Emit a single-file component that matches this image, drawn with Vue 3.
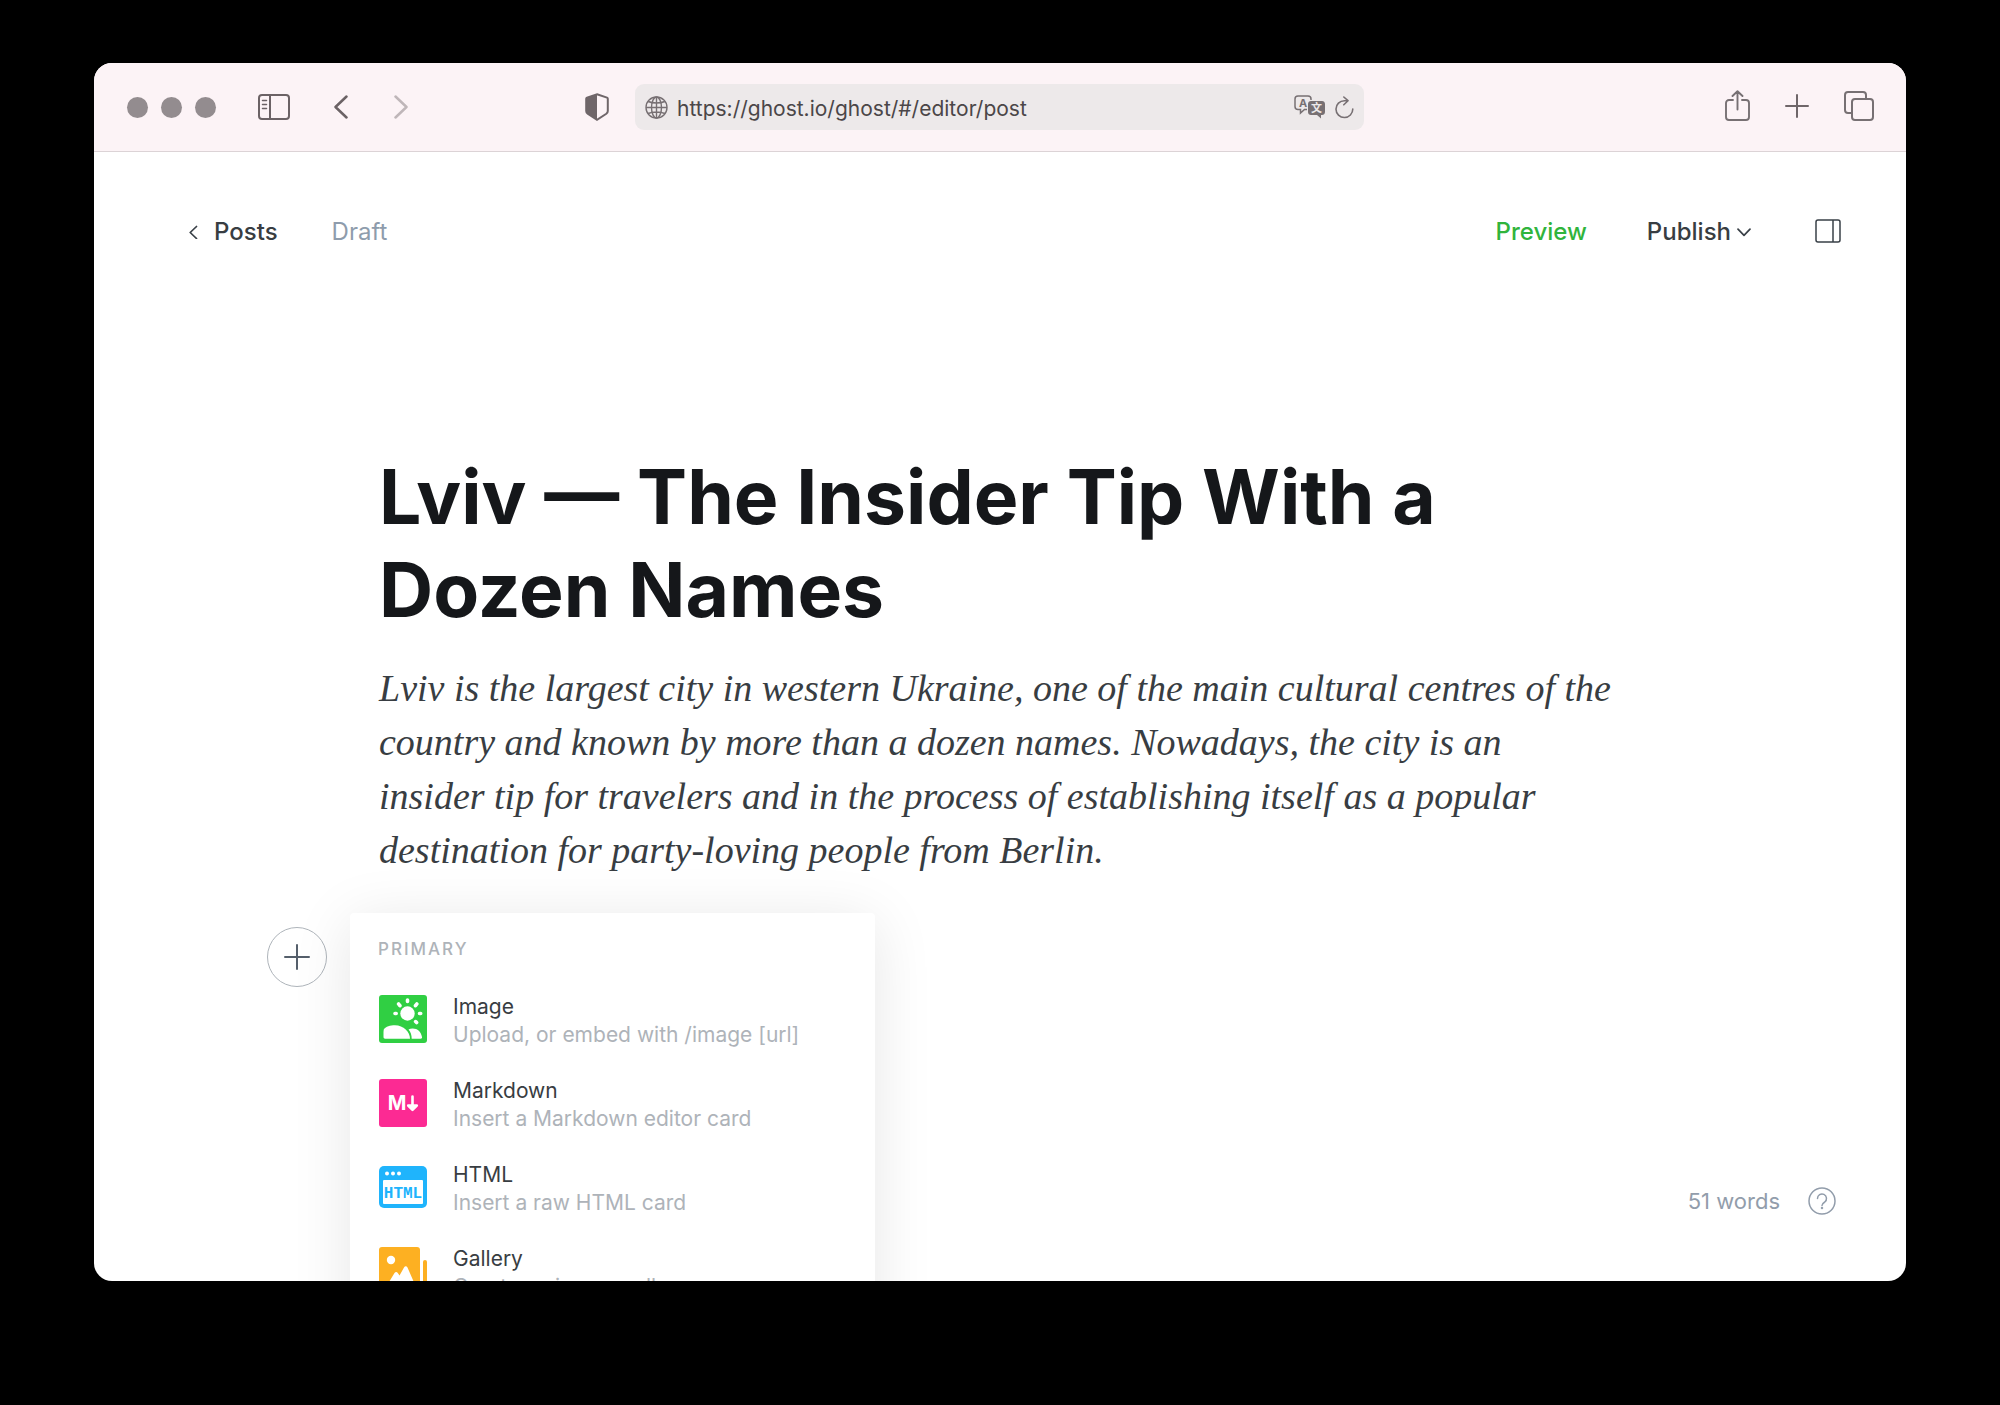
<script setup>
import { ref } from 'vue'

const url = ref('https://ghost.io/ghost/#/editor/post')

const cards = [
  { id: 'image', name: 'Image', hint: 'Upload, or embed with /image [url]' },
  { id: 'markdown', name: 'Markdown', hint: 'Insert a Markdown editor card' },
  { id: 'html', name: 'HTML', hint: 'Insert a raw HTML card' },
  { id: 'gallery', name: 'Gallery', hint: 'Create an image gallery' },
]
</script>

<template>
  <div class="desktop">
    <div class="window">
      <header class="toolbar">
        <div class="side start">
          <div class="lights"><i></i><i></i><i></i></div>
          <button class="tool sidebar" aria-label="Toggle sidebar">
            <svg width="32" height="26" viewBox="0 0 32 26" fill="none" stroke="#6b6265" stroke-width="2">
              <rect x="1" y="1" width="30" height="24" rx="3" />
              <path d="M12 1v24" />
              <path d="M4.500 6.500h4M4.500 10.500h4M4.500 14.500h4" stroke-width="1.500" stroke-linecap="round" />
            </svg>
          </button>
          <button class="tool back" aria-label="Back">
            <svg width="14" height="24" viewBox="0 0 14 24" fill="none" stroke="#6b6265" stroke-width="2.500" stroke-linecap="round" stroke-linejoin="round">
              <path d="M12.500 1.500 1.500 12l11 10.500" />
            </svg>
          </button>
          <button class="tool forward" aria-label="Forward">
            <svg width="14" height="24" viewBox="0 0 14 24" fill="none" stroke="#bfb6b9" stroke-width="2.500" stroke-linecap="round" stroke-linejoin="round">
              <path d="M1.500 1.500 12.500 12l-11 10.500" />
            </svg>
          </button>
        </div>

        <div class="middle">
          <button class="tool" aria-label="Privacy report">
            <svg width="24" height="28" viewBox="0 0 24 28">
              <path d="M12 1.200 22 4.600c.5.200.8.600.8 1.100V18c0 1-.5 2-1.500 2.800L12 26.800l-9.300-6C1.700 20 1.200 19 1.200 18V5.700c0-.5.3-.9.800-1.100z" fill="none" stroke="#6f6669" stroke-width="2" />
              <path d="M12 1.200 2 4.600c-.5.200-.8.600-.8 1.100V18c0 1 .5 2 1.500 2.800l9.300 6z" fill="#6f6669" />
            </svg>
          </button>
          <div class="address">
            <svg width="23" height="23" viewBox="0 0 23 23" fill="none" stroke="#777073" stroke-width="1.400">
              <circle cx="11.500" cy="11.500" r="10.500" />
              <ellipse cx="11.500" cy="11.500" rx="5" ry="10.500" />
              <path d="M11.500 1v21M1 11.500h21M3.200 5.500c4.500 2 12.100 2 16.600 0M3.200 17.500c4.500-2 12.100-2 16.600 0" />
            </svg>
            <input v-model="url" type="text" aria-label="Address" spellcheck="false" />
            <button class="tool" aria-label="Translate">
              <svg width="32" height="24" viewBox="0 0 32 24">
                <path d="M13 14.500h-2.500L6.500 18v-3.500H4c-1.700 0-3-1.300-3-3V4c0-1.700 1.300-3 3-3h10c1.700 0 3 1.300 3 3v1" fill="none" stroke="#777073" stroke-width="1.500" />
                <path d="M17 6h11c1.700 0 3 1.300 3 3v8c0 1.700-1.300 3-3 3h-1v3.500L23 20h-6c-1.700 0-3-1.300-3-3V9c0-1.700 1.300-3 3-3z" fill="#777073" />
                <text x="9" y="12" text-anchor="middle" class="glyph" font-size="11" fill="#777073">A</text>
                <text x="22.500" y="17" text-anchor="middle" class="glyph" font-size="11" fill="#ede9ea">文</text>
              </svg>
            </button>
            <button class="tool" aria-label="Reload">
              <svg width="19" height="23" viewBox="0 0 19 23" fill="none" stroke="#777073" stroke-width="1.600" stroke-linecap="round" stroke-linejoin="round">
                <path d="M17.800 13a8.400 8.400 0 1 1-8.400-8.300h3.400M8.800 1l4.200 3.700-4.200 4.100" />
              </svg>
            </button>
          </div>
        </div>

        <div class="side end">
          <button class="tool" aria-label="Share">
            <svg width="25" height="34" viewBox="0 0 25 34" fill="none" stroke="#777073" stroke-width="1.900" stroke-linecap="round" stroke-linejoin="round">
              <path d="M8 10H4a3 3 0 0 0-3 3v14a3 3 0 0 0 3 3h17a3 3 0 0 0 3-3V13a3 3 0 0 0-3-3h-4M12.500 19.500V1.500M7.500 6l5-4.800L17.500 6" />
            </svg>
          </button>
          <button class="tool" aria-label="New tab">
            <svg width="24" height="26" viewBox="0 0 24 26" stroke="#6f6669" stroke-width="2" stroke-linecap="round">
              <path d="M12 1v22M1 12h22" />
            </svg>
          </button>
          <button class="tool" aria-label="Tab overview">
            <svg width="30" height="32" viewBox="0 0 30 32" fill="none" stroke="#777073" stroke-width="2">
              <rect x="8" y="8" width="21" height="21" rx="3" />
              <path d="M8 22H4a3 3 0 0 1-3-3V4a3 3 0 0 1 3-3h15a3 3 0 0 1 3 3v4" />
            </svg>
          </button>
        </div>
      </header>

      <main class="page">
        <nav class="actions">
          <a href="#/posts" class="posts">
            <svg width="9" height="14" viewBox="0 0 9 14" fill="none" stroke="#394047" stroke-width="1.700" stroke-linecap="round" stroke-linejoin="round">
              <path d="M7.500 1.500 1.200 7.500l6.300 6" />
            </svg>
            Posts
          </a>
          <span class="status">Draft</span>
          <button class="preview">Preview</button>
          <button class="publish">
            Publish
            <svg width="14" height="9" viewBox="0 0 14 9" fill="none" stroke="#394047" stroke-width="1.700" stroke-linecap="round" stroke-linejoin="round">
              <path d="m1 1.200 6 6.200 6-6.200" />
            </svg>
          </button>
          <button class="settings" aria-label="Post settings">
            <svg width="26" height="26" viewBox="0 0 26 26" fill="none" stroke="#394047" stroke-width="1.500">
              <rect x="1" y="1" width="24" height="22" rx="2" />
              <path d="M18 1v22" />
            </svg>
          </button>
        </nav>

        <article class="editor">
          <h1>Lviv — The Insider Tip With a Dozen Names</h1>
          <p>
            Lviv is the largest city in western Ukraine, one of the main cultural centres of the
            country and known by more than a dozen names. Nowadays, the city is an<br />
            insider tip for travelers and in the process of establishing itself as a popular
            destination for party-loving people from Berlin.
          </p>

          <div class="insert">
            <button class="add" aria-label="Add a card">
              <svg width="26" height="26" viewBox="0 0 26 26" stroke="#555f6b" stroke-width="2" stroke-linecap="round">
                <path d="M13 1v24M1 13h24" />
              </svg>
            </button>
            <section class="menu">
              <h2>Primary</h2>
              <button v-for="card in cards" :key="card.id" class="card">
                <svg v-if="card.id === 'image'" width="48" height="48" viewBox="0 0 48 48">
                  <rect width="48" height="48" rx="3" fill="#30cf43" />
                  <g fill="#fff">
                    <circle cx="28.500" cy="18.500" r="7.200" />
                    <path d="M4.500 38v4c0 1 .6 1.700 1.600 1.700H31c0-7-6.500-13.500-15-13.500-5 0-9.200 1.500-11 3.800-.4 1-.5 2.500-.5 4z" />
                    <path d="M29.500 34.500c2.300 2.600 3.200 5.800 3.200 9.200h9c1 0 1.500-.6 1.300-1.600-.9-5.200-4.500-8.600-9.300-8.600-1.600 0-3 .3-4.200 1z" />
                  </g>
                  <path d="M28.500 5v1.500M19.600 9l1.300 1.700M37.800 9l-1.300 1.700M16 18.500h1.200M40.500 18.500h1.200M36.600 26.600l1 1" stroke="#fff" stroke-width="3.600" stroke-linecap="round" />
                </svg>
                <svg v-else-if="card.id === 'markdown'" width="48" height="48" viewBox="0 0 48 48">
                  <rect width="48" height="48" rx="3" fill="#fc2a93" />
                  <text x="18" y="31" text-anchor="middle" class="glyph" font-size="20" fill="#fff">M</text>
                  <path d="M33.500 17.500v12M29.200 26.500l4.300 4.300 4.300-4.300z" fill="#fff" stroke="#fff" stroke-width="2.600" stroke-linecap="round" stroke-linejoin="round" />
                </svg>
                <svg v-else-if="card.id === 'html'" width="48" height="48" viewBox="0 0 48 48">
                  <rect y="3" width="48" height="42" rx="5" fill="#1fb4fc" />
                  <rect x="4" y="17" width="40" height="24" rx="1" fill="#fff" />
                  <g fill="#fff"><circle cx="8" cy="10.500" r="2" /><circle cx="14" cy="10.500" r="2" /><circle cx="20" cy="10.500" r="2" /></g>
                  <text x="24" y="35" text-anchor="middle" class="mono" font-size="16" fill="#1fb4fc">HTML</text>
                </svg>
                <svg v-else width="48" height="48" viewBox="0 0 48 48">
                  <rect width="41" height="41" rx="3" fill="#fdb022" />
                  <rect x="44" y="13" width="4" height="35" rx="2" fill="#fdb022" />
                  <circle cx="12" cy="13" r="4.200" fill="#fff" />
                  <path d="M7 40 15.500 26c1-1.500 2.300-1.500 3.300 0l1.700 2.500L25 20.500c1-1.600 2.500-1.600 3.500 0L37 40z" fill="#fff" />
                </svg>
                <span class="label">
                  <strong>{{ card.name }}</strong>
                  <small>{{ card.hint }}</small>
                </span>
              </button>
            </section>
          </div>
        </article>

        <footer class="count">
          <span>51 words</span>
          <button aria-label="Help">
            <svg width="28" height="28" viewBox="0 0 28 28" fill="none" stroke="#929dab" stroke-width="1.500" stroke-linecap="round">
              <circle cx="14" cy="14" r="13" />
              <path d="M9.500 11.500a4.500 4.500 0 1 1 7.300 3.500c-1.700 1.100-2.800 1.900-2.800 3.500" />
              <circle cx="14" cy="21" r=".5" />
            </svg>
          </button>
        </footer>
      </main>
    </div>
  </div>
</template>

<style>
body {
  background: #000;
}
</style>

<style scoped>
.desktop {
  box-sizing: border-box;
  height: 100vh;
  padding: 63px 94px 124px;
  display: flex;
  background: #000;
  color: #383d42;
  font-family: Inter, "Liberation Sans", sans-serif;
  font-size: 24px;
}

.window {
  flex: 1;
  min-width: 0;
  display: flex;
  flex-direction: column;
  overflow: hidden;
  border-radius: 18px;
  background: #fff;
}

button {
  padding: 0;
  border: 0;
  background: none;
  color: inherit;
  font: inherit;
  text-align: left;
}

svg {
  display: block;
  flex: none;
}

.glyph {
  font-family: Inter, "Noto Sans CJK SC", sans-serif;
  font-weight: 700;
}

.mono {
  font-family: "Liberation Mono", monospace;
  font-weight: 700;
}

.toolbar {
  flex: none;
  box-sizing: border-box;
  height: 89px;
  padding: 0 32px 0 33px;
  display: flex;
  align-items: center;
  border-bottom: 1px solid #dcd3d6;
  background: #fcf3f6;
}

.side {
  flex: 1;
  display: flex;
  align-items: center;
}

.lights {
  display: flex;
  gap: 13px;
}

.lights i {
  width: 21px;
  height: 21px;
  border-radius: 50%;
  background: #938c8f;
}

.sidebar {
  margin-left: 42px;
}

.back {
  margin-left: 44px;
}

.forward {
  margin-left: 46px;
}

.end {
  justify-content: flex-end;
  gap: 35px;
}

.middle {
  flex: 0 1 779px;
  display: flex;
  align-items: center;
  gap: 26px;
  margin-right: 52px;
}

.address {
  flex: 1;
  min-width: 0;
  box-sizing: border-box;
  height: 46px;
  padding: 0 10px;
  display: flex;
  align-items: center;
  gap: 9px;
  border-radius: 9px;
  background: #ede9ea;
}

.address input {
  flex: 1;
  min-width: 0;
  padding: 2px 0 0;
  border: 0;
  outline: 0;
  background: none;
  color: #4b4648;
  font: inherit;
  font-size: 21px;
}

.page {
  flex: 1;
  min-height: 0;
  position: relative;
}

.actions {
  display: flex;
  align-items: center;
  height: 28px;
  padding: 66px 65px 0 95px;
  line-height: 28px;
  font-weight: 500;
}

.posts {
  display: flex;
  align-items: center;
  gap: 16px;
  color: inherit;
  text-decoration: none;
}

.status {
  margin-left: 54px;
  margin-right: auto;
  color: #8e9cac;
  font-weight: 400;
}

.preview {
  color: #30b43c;
}

.publish {
  margin-left: 60px;
  display: flex;
  align-items: center;
  gap: 6px;
}

.settings {
  margin-left: 64px;
}

.editor {
  max-width: 1242px;
  margin: 204px auto 0;
}

h1 {
  margin: 0;
  color: #15171a;
  font-size: 75px;
  font-weight: 700;
  line-height: 93px;
}

p {
  margin: 25px 0 0;
  font-family: Georgia, "Liberation Serif", serif;
  font-size: 38px;
  font-style: italic;
  line-height: 54px;
}

.insert {
  display: flex;
  align-items: flex-start;
  gap: 23px;
  margin: 36px 0 0 -112px;
}

.add {
  box-sizing: border-box;
  width: 60px;
  height: 60px;
  margin-top: 14px;
  display: grid;
  place-items: center;
  border: 1px solid #aeb4ba;
  border-radius: 50%;
}

.menu {
  box-sizing: border-box;
  width: 525px;
  padding: 24px 28px;
  border-radius: 4px;
  background: #fff;
  box-shadow: 0 8px 60px rgba(0, 0, 0, 0.1);
}

h2 {
  margin: 0 0 16px;
  color: #aeb3b9;
  font-size: 17px;
  font-weight: 500;
  line-height: 24px;
  letter-spacing: 2px;
  text-transform: uppercase;
}

.card {
  width: 100%;
  height: 84px;
  padding-left: 1px;
  display: flex;
  align-items: center;
  gap: 26px;
}

.label {
  display: flex;
  flex-direction: column;
  padding-top: 3px;
  line-height: 28px;
}

strong,
small {
  font-size: 21px;
  font-weight: 400;
}

small {
  color: #aeb3b9;
}

.count {
  position: absolute;
  right: 70px;
  bottom: 66px;
  display: flex;
  align-items: center;
  gap: 28px;
  color: #929dab;
  font-size: 22px;
}
</style>
